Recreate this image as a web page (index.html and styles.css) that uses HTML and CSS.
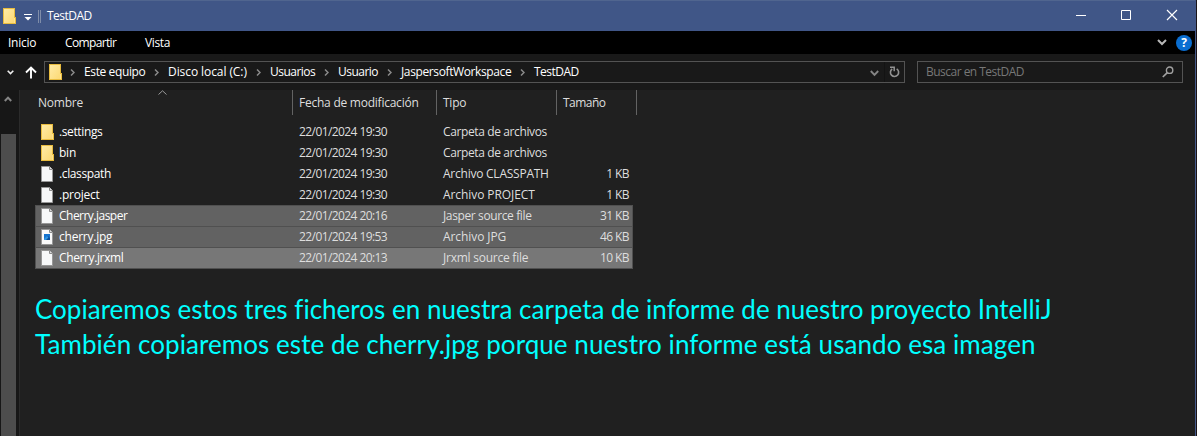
FILE: index.html
```html
<!DOCTYPE html>
<html lang="es">
<head>
<meta charset="utf-8">
<title>TestDAD</title>
<link rel="stylesheet" href="styles.css">
</head>
<body>
<svg class="defs" width="0" height="0">
  <defs>
    <linearGradient id="gold" x1="0" y1="0" x2="1" y2="1"><stop offset="0" stop-color="#ffeba6"/><stop offset="1" stop-color="#fcd975"/></linearGradient>
  </defs>
  <symbol id="folder" viewBox="0 0 13 16"><path d="M0 0H12V9H13V16H0Z" fill="#e9bc3f"/><path d="M1 1H11V15H1Z" fill="url(#gold)"/><path d="M11 10H12V15H11Z" fill="#ffe391"/></symbol>
  <symbol id="file" viewBox="0 0 12 16"><path d="M.5 .5H8.5L11.5 3.5V15.5H.5Z" fill="#f7f8f9" stroke="#979797"/><path d="M8.5 .5V3.5H11.5" fill="#ddd" stroke="#8b8b8b"/></symbol>
  <symbol id="image" viewBox="0 0 12 16"><path d="M.5 .5H8.5L11.5 3.5V15.5H.5Z" fill="#fafafa" stroke="#979797"/><path d="M8.5 .5V3.5H11.5" fill="#ddd" stroke="#8b8b8b"/><path d="M3 5H9V11H3Z" fill="#1673cf"/><path d="M3 11L7 7L9 9V11Z" fill="#0b4e9b"/><path d="M3 10L6 7L7.5 8.5L5 11H3Z" fill="#2f96e4"/></symbol>
  <symbol id="crumb" viewBox="0 0 5 7"><path d="M1 .5L4 3.5L1 6.5" fill="none" stroke="#8a8a8a" stroke-width="1.5"/></symbol>
</svg>
<div class="window">
  <header class="titlebar">
    <svg class="app" width="13" height="16"><use href="#folder"/></svg>
    <svg class="quick" width="8" height="7" viewBox="0 0 8 7"><path d="M0 .5H8" stroke="#fff"/><path d="M.5 3H7.5L4 6.5Z" fill="#fff"/></svg>
    <span class="divider"></span>
    <span class="title close">TestDAD</span>
    <svg class="controls" width="104" height="12" viewBox="0 0 104 12"><path d="M0 6.5H10M45.5 1.5H54.5V10.5H45.5Z" fill="none" stroke="#fff"/><path d="M91 1L101 11M101 1L91 11" fill="none" stroke="#fff" stroke-width="1.15"/></svg>
  </header>
  <nav class="menu">
    <span class="m-home">Inicio</span><span class="m-share tight">Compartir</span><span class="m-view snug">Vista</span>
    <svg class="expand" width="10" height="7" viewBox="0 0 10 7"><path d="M1 1L5 5L9 1" fill="none" stroke="#b8b8b8" stroke-width="2"/></svg>
    <span class="help">?</span>
  </nav>
  <div class="addressbar">
    <svg class="history" width="7" height="5" viewBox="0 0 7 5"><path d="M.7 .7L3.5 3.5L6.3 .7" fill="none" stroke="#eee" stroke-width="1.6"/></svg>
    <svg class="up" width="12" height="13" viewBox="0 0 12 13"><path d="M6 12.5V2M1 6.5L6 1.5L11 6.5" fill="none" stroke="#fff" stroke-width="1.9"/></svg>
    <div class="path">
      <svg class="place" width="13" height="16"><use href="#folder"/></svg>
      <span class="crumb c1"><svg width="5" height="7"><use href="#crumb"/></svg><span class="snug">Este equipo</span></span>
      <span class="crumb c2"><svg width="5" height="7"><use href="#crumb"/></svg><span class="wide">Disco local (C:)</span></span>
      <span class="crumb c3"><svg width="5" height="7"><use href="#crumb"/></svg><span class="close">Usuarios</span></span>
      <span class="crumb c4"><svg width="5" height="7"><use href="#crumb"/></svg><span class="close">Usuario</span></span>
      <span class="crumb c5"><svg width="5" height="7"><use href="#crumb"/></svg><span class="snug">JaspersoftWorkspace</span></span>
      <span class="crumb"><svg width="5" height="7"><use href="#crumb"/></svg><span class="close">TestDAD</span></span>
      <svg class="drop" width="9" height="7" viewBox="0 0 9 7"><path d="M.8 1L4.5 4.8L8.2 1" fill="none" stroke="#858585" stroke-width="1.9"/></svg>
      <span class="split"></span>
      <svg class="reload" width="11" height="12" viewBox="0 0 11 12"><path d="M7.7 2.9A4.1 4.1 0 1 1 3.2 3" fill="none" stroke="#929292" stroke-width="1.6"/><path d="M1 1.2H5.2V5.3" fill="none" stroke="#929292" stroke-width="1.5"/></svg>
    </div>
    <div class="search"><span class="close">Buscar en TestDAD</span>
      <svg width="12" height="12" viewBox="0 0 12 12"><circle cx="7.6" cy="4.2" r="3.2" fill="none" stroke="#a0a0a0" stroke-width="1.4"/><path d="M5.3 6.6L.8 11" stroke="#a0a0a0" stroke-width="1.7"/></svg>
    </div>
  </div>
  <div class="body">
    <aside class="scroll">
      <svg width="8" height="7" viewBox="0 0 8 7"><path d="M.8 5L4 1.6L7.2 5" fill="none" stroke="#858585" stroke-width="2"/></svg>
      <span class="thumb"></span>
    </aside>
    <main class="content">
      <div class="head">
        <span class="h-name">Nombre<svg class="sort" width="9" height="5" viewBox="0 0 9 5"><path d="M.5 4.5L4.5 .8L8.5 4.5" fill="none" stroke="#9a9a9a"/></svg></span>
        <span class="h-date">Fecha de modificación</span><span class="h-type">Tipo</span><span class="h-size close">Tamaño</span>
      </div>
      <div class="rows">
        <div class="row"><svg class="dir"><use href="#folder"/></svg><span class="name snug">.settings</span><span class="date">22/01/2024 19:30</span><span class="type snug">Carpeta de archivos</span><span class="size"></span></div>
        <div class="row"><svg class="dir"><use href="#folder"/></svg><span class="name">bin</span><span class="date">22/01/2024 19:30</span><span class="type snug">Carpeta de archivos</span><span class="size"></span></div>
        <div class="row"><svg><use href="#file"/></svg><span class="name snug">.classpath</span><span class="date">22/01/2024 19:30</span><span class="type">Archivo CLASSPATH</span><span class="size">1 KB</span></div>
        <div class="row"><svg><use href="#file"/></svg><span class="name">.project</span><span class="date">22/01/2024 19:30</span><span class="type wide">Archivo PROJECT</span><span class="size">1 KB</span></div>
        <div class="row selected"><svg><use href="#file"/></svg><span class="name close">Cherry.jasper</span><span class="date">22/01/2024 20:16</span><span class="type snug">Jasper source file</span><span class="size">31 KB</span></div>
        <div class="row selected"><svg><use href="#image"/></svg><span class="name">cherry.jpg</span><span class="date">22/01/2024 19:53</span><span class="type wide">Archivo JPG</span><span class="size">46 KB</span></div>
        <div class="row selected focus"><svg><use href="#file"/></svg><span class="name snug">Cherry.jrxml</span><span class="date">22/01/2024 20:13</span><span class="type">Jrxml source file</span><span class="size">10 KB</span></div>
      </div>
      <div class="note"><p>Copiaremos estos tres ficheros en nuestra carpeta de informe de nuestro proyecto IntelliJ</p><p class="second">También copiaremos este de cherry.jpg porque nuestro informe está usando esa imagen</p></div>
    </main>
  </div>
</div>
</body>
</html>
```
FILE: styles.css
```css
* { box-sizing: border-box; }
body { margin: 0; background: #1a1416; color: #fff; font: 12px/20px "Open Sans", "Noto Sans", sans-serif; letter-spacing: -.24px; overflow: hidden; }
svg { display: block; flex: none; }
.defs { position: absolute; }
span { white-space: nowrap; }
.tight { letter-spacing: -.64px; }
.close { letter-spacing: -.52px; }
.snug { letter-spacing: -.38px; }
.wide { letter-spacing: -.08px; }

.window { width: 1196px; height: 436px; display: flex; flex-direction: column; border-right: 1px solid #435889; background: #191919; }

.titlebar { height: 31px; flex: none; display: flex; align-items: center; padding-left: 3px; background: #405687; border-top: 1px solid #50658f; }
.quick { margin: 3px 0 0 8px; }
.divider { width: 3px; height: 13px; margin-left: 6px; border: 1px solid #7f8da9; border-width: 0 1px; }
.title { margin-left: 6px; }
.controls { margin: 0 15px 3px auto; }

.menu { height: 23px; flex: none; display: flex; align-items: center; background: #000; padding: 0 3px 0 8px; }
.m-home { width: 57px; }
.m-share { width: 80px; }
.expand { margin: 0 9px 0 auto; }
.help { width: 16px; height: 16px; border-radius: 50%; background: #0a6ed1; font-size: 12px; font-weight: 700; line-height: 16px; text-align: center; }

.addressbar { height: 36px; flex: none; display: flex; align-items: center; padding-left: 7px; }
.up { margin: 0 13px 0 11px; }
.path { width: 861px; height: 22px; display: flex; align-items: center; border: 1px solid #535353; margin-left: -6px; padding-left: 4px; }
.place { margin-right: 8px; }
.crumb { display: flex; align-items: center; gap: 9px; }
.c1 { width: 84px; }
.c2 { width: 102px; }
.c3 { width: 68px; }
.c4 { width: 63px; }
.c5 { width: 133px; }
.drop { margin: 2px 5px 0 auto; }
.split { width: 1px; height: 20px; background: #131313; }
.reload { margin: 0 4px 0 4px; }
.search { width: 266px; height: 22px; margin-left: 12px; padding: 0 8px; border: 1px solid #535353; display: flex; align-items: center; justify-content: space-between; color: #777; }

.body { flex: 1; display: flex; min-height: 0; }
.scroll { width: 20px; flex: none; display: flex; flex-direction: column; padding-top: 6px; background: #171717; border-right: 1px solid #2b2b2b; }
.scroll svg { margin-left: 4px; }
.thumb { flex: 1; width: 15px; margin: 31px 0 0 1px; background: #4d4d4d; }
.content { flex: 1; background: #202020; }
.head { display: flex; height: 25px; line-height: 25px; color: #dedede; }
.head > span { border-right: 1px solid #636363; }
.h-name { width: 273px; padding-left: 18px; position: relative; }
.sort { position: absolute; left: 138px; top: 0; }
.h-date { width: 144px; padding-left: 6px; }
.h-type { width: 120px; padding-left: 6px; }
.h-size { width: 80px; padding-left: 6px; }
.rows { margin: 6px 0 0 15px; width: 598px; }
.row { height: 21px; display: flex; align-items: center; padding: 0 4px 0 6px; color: #dedede; line-height: 21px; }
.row svg { width: 12px; height: 16px; margin-right: 6px; }
.row .dir { width: 13px; margin-right: 5px; }
.row .name { width: 240px; color: #fff; }
.date { width: 144px; letter-spacing: -.58px; }
.type { width: 120px; }
.size { flex: 1; text-align: right; letter-spacing: -.6px; }
.selected { background: #626262; box-shadow: inset 0 0 0 1px #505050, 0 1px #505050; }
.selected + .selected { box-shadow: inset 1px 0 #505050, inset -1px 0 #505050, inset 0 1px #505050, 0 1px #505050; }
.row.selected { box-shadow: inset 1px 0 #505050, inset -1px 0 #505050, inset 0 1px #505050, 0 1px #505050; }
.selected.focus { background: #777; }
.note { margin: 24px 0 0 15px; color: #0ff; font: 26px/35px Lato, "Open Sans", sans-serif; letter-spacing: .01px; white-space: nowrap; font-variant-ligatures: common-ligatures; }
.note p { margin: 0; }
.note .second { letter-spacing: .07px; }
```
